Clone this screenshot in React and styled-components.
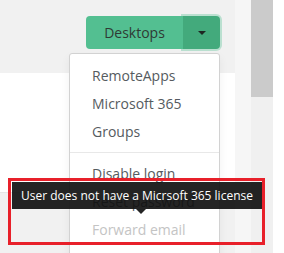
import React from 'react';
import styled, { createGlobalStyle } from 'styled-components';

const GlobalStyle = createGlobalStyle`
    html, body {
        margin: 0;
        padding: 0;
        overflow: hidden;
        background: #ffffff;
    }
    body {
        font-family: "Open Sans", "Liberation Sans", sans-serif;
    }
`;

const menuItems = [
    { label: 'RemoteApps' },
    { label: 'Microsoft 365' },
    { label: 'Groups' },
    { divider: true },
    { label: 'Disable login' },
    { label: 'Reset password' },
    { label: 'Forward email', disabled: true },
];

function App() {
    return (
        <>
            <GlobalStyle />
            <PageStyled>
                <div className="main">
                    <Header>
                        <ButtonGroup>
                            <MainButton>Desktops</MainButton>
                            <CaretButton aria-label="More">
                                <span className="caret" />
                            </CaretButton>
                            <Menu>
                                {menuItems.map((item, i) =>
                                    item.divider ? (
                                        <Divider key={i} />
                                    ) : (
                                        <MenuItem key={i} $disabled={item.disabled}>
                                            {item.label}
                                        </MenuItem>
                                    )
                                )}
                            </Menu>
                        </ButtonGroup>
                    </Header>
                    <Content />
                    <StripeRow />
                </div>
                <Gutter />
                <Scrollbar>
                    <div className="thumb" />
                </Scrollbar>
                <Tooltip>User does not have a Micrsoft 365 license</Tooltip>
                <Highlight />
            </PageStyled>
        </>
    );
}

const PageStyled = styled.div`
    position: relative;
    display: flex;
    width: 284px;
    height: 253px;
    overflow: hidden;

    .main {
        width: 235px;
        display: flex;
        flex-direction: column;
    }
`;

const Header = styled.div`
    height: 73px;
    background: #f1f1f1;
    display: flex;
    justify-content: flex-end;
    align-items: flex-start;
    padding: 16px 15px 0 0;
    box-sizing: border-box;
`;

const ButtonGroup = styled.div`
    position: relative;
    display: flex;
    height: 33px;
`;

const MainButton = styled.button`
    width: 97px;
    height: 33px;
    border: none;
    border-radius: 4px 0 0 4px;
    background: #53bf91;
    color: #2f3a34;
    font-family: "Open Sans", "Liberation Sans", sans-serif;
    font-size: 14px;
    padding: 0;
    cursor: pointer;
`;

const CaretButton = styled.button`
    width: 37px;
    height: 33px;
    border: none;
    border-radius: 0 4px 4px 0;
    background: #43aa7c;
    box-shadow: 0 0 0 2px rgba(83, 191, 145, 0.35);
    display: flex;
    align-items: center;
    justify-content: center;
    padding: 0;
    cursor: pointer;

    .caret {
        width: 0;
        height: 0;
        border-left: 4px solid transparent;
        border-right: 4px solid transparent;
        border-top: 4px solid #1e2622;
    }
`;

const Menu = styled.ul`
    position: absolute;
    top: 37px;
    right: 0;
    width: 151px;
    margin: 0;
    padding: 8px 0 20px;
    list-style: none;
    background: #ffffff;
    border: 1px solid #d2d2d2;
    border-radius: 3px;
    box-sizing: border-box;
    box-shadow: 0 4px 10px rgba(0, 0, 0, 0.06);
    z-index: 2;
`;

const MenuItem = styled.li`
    padding: 4px 22px;
    line-height: 20px;
    font-size: 14px;
    color: ${({ $disabled }) => ($disabled ? '#c4c4c4' : '#555b60')};
    white-space: nowrap;
`;

const Divider = styled.li`
    height: 1px;
    margin: 6px 0 7px;
    background: #e8e8e8;
`;

const Content = styled.div`
    height: 119px;
    background: #ffffff;
`;

const StripeRow = styled.div`
    flex: 1;
    background: #f1f1f1;
    border-top: 1px solid #e6e6e6;
`;

const Gutter = styled.div`
    width: 16px;
    background: #f6f6f6;
`;

const Scrollbar = styled.div`
    width: 22px;
    background: #f0f0f0;

    .thumb {
        height: 97px;
        background: #cbcbcb;
    }
`;

const Tooltip = styled.div`
    position: absolute;
    left: 12px;
    top: 182px;
    width: 250px;
    height: 27px;
    background: rgba(17, 17, 17, 0.92);
    color: #ffffff;
    font-size: 12px;
    line-height: 27px;
    text-align: center;
    white-space: nowrap;
    z-index: 3;

    &::after {
        content: '';
        position: absolute;
        left: 124px;
        bottom: -5px;
        border-left: 5px solid transparent;
        border-right: 5px solid transparent;
        border-top: 5px solid rgba(17, 17, 17, 0.92);
    }
`;

const Highlight = styled.div`
    position: absolute;
    left: 8px;
    top: 178px;
    width: 257px;
    height: 67px;
    border: 3px solid #e8202a;
    box-sizing: border-box;
    z-index: 4;
`;

export default App;
